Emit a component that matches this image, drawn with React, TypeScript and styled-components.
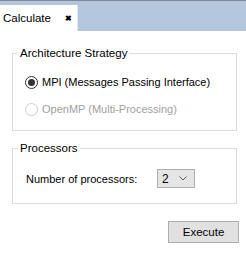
import React, { useState } from 'react';
import styled, { createGlobalStyle } from 'styled-components';

const GlobalStyle = createGlobalStyle`
  html, body {
    margin: 0;
    padding: 0;
    background: #ffffff;
  }
  body {
    font-family: "Liberation Sans", Arial, sans-serif;
    font-size: 11px;
    color: #000000;
  }
`;

const Page = styled.div`
  width: 246px;
  height: 254px;
  background: #ffffff;
  font-family: "Liberation Sans", Arial, sans-serif;
  font-size: 11px;
`;

const TabStrip = styled.div`
  height: 30px;
  background: #b3c6de;
  border-top: 1px solid #7f8a99;
  display: flex;
  align-items: flex-end;
`;

const Tab = styled.div`
  width: 78px;
  height: 26px;
  background: #ffffff;
  border-right: 1px solid #e4e9f0;
  display: flex;
  align-items: center;
  padding-left: 3px;
  box-sizing: border-box;
  font-size: 11.5px;
  color: #000000;
`;

const Close = styled.span`
  margin-left: 14px;
  font-size: 8px;
  font-weight: bold;
`;

const Content = styled.div`
  padding: 15px 7px 0 12px;
`;

const Group = styled.fieldset<{ $height: number }>`
  margin: 0 2px 10px 0;
  padding: 0 0 0 5px;
  height: ${p => p.$height}px;
  border: 1px solid #dcdcdc;
  box-sizing: border-box;
`;

const Legend = styled.legend`
  padding: 0 2px;
  font-size: 11.5px;
  line-height: 14px;
  color: #000000;
`;

const Options = styled.div`
  display: flex;
  flex-direction: column;
  gap: 13px;
  padding: 15px 0 0 7px;
`;

const Option = styled.label<{ $disabled?: boolean }>`
  display: flex;
  align-items: center;
  gap: 4px;
  height: 14px;
  font-size: 11px;
  color: ${p => (p.$disabled ? '#a0a0a0' : '#000000')};
`;

const Radio = styled.span<{ $checked?: boolean; $disabled?: boolean }>`
  width: 13px;
  height: 13px;
  border-radius: 50%;
  border: 1px solid ${p => (p.$disabled ? '#cccccc' : '#333333')};
  box-sizing: border-box;
  display: flex;
  align-items: center;
  justify-content: center;

  &::after {
    content: '';
    width: 7px;
    height: 7px;
    border-radius: 50%;
    background: ${p => (p.$checked ? '#333333' : 'transparent')};
  }
`;

const Row = styled.div`
  display: flex;
  align-items: center;
  padding: 14px 0 0 8px;
`;

const RowLabel = styled.span`
  font-size: 11px;
  width: 131px;
`;

const Select = styled.div`
  width: 38px;
  height: 19px;
  box-sizing: border-box;
  background: #e5e5e5;
  border: 1px solid #adadad;
  display: flex;
  align-items: center;
  justify-content: space-between;
  padding: 0 7px 0 4px;
  font-size: 12px;
`;

const Footer = styled.div`
  display: flex;
  justify-content: flex-end;
  padding: 7px 0 0 0;
`;

const Button = styled.button`
  width: 71px;
  height: 22px;
  background: #e1e1e1;
  border: 1px solid #adadad;
  font-family: "Liberation Sans", Arial, sans-serif;
  font-size: 11.5px;
  color: #000000;
  padding: 0;
`;

const App: React.FC = () => {
  const [strategy, setStrategy] = useState<'mpi' | 'openmp'>('mpi');

  return (
    <Page>
      <GlobalStyle />
      <TabStrip>
        <Tab>
          Calculate
          <Close>✖</Close>
        </Tab>
      </TabStrip>

      <Content>
        <Group $height={85}>
          <Legend>Architecture Strategy</Legend>
          <Options>
            <Option onClick={() => setStrategy('mpi')}>
              <Radio $checked={strategy === 'mpi'} />
              MPI (Messages Passing Interface)
            </Option>
            <Option $disabled>
              <Radio $disabled $checked={strategy === 'openmp'} />
              OpenMP (Multi-Processing)
            </Option>
          </Options>
        </Group>

        <Group $height={63}>
          <Legend>Processors</Legend>
          <Row>
            <RowLabel>Number of processors:</RowLabel>
            <Select>
              2
              <svg width="8" height="5" viewBox="0 0 8 5">
                <path d="M0.5 0.5 L4 4 L7.5 0.5" fill="none" stroke="#606060" strokeWidth="1" />
              </svg>
            </Select>
          </Row>
        </Group>

        <Footer>
          <Button>Execute</Button>
        </Footer>
      </Content>
    </Page>
  );
};

export default App;
